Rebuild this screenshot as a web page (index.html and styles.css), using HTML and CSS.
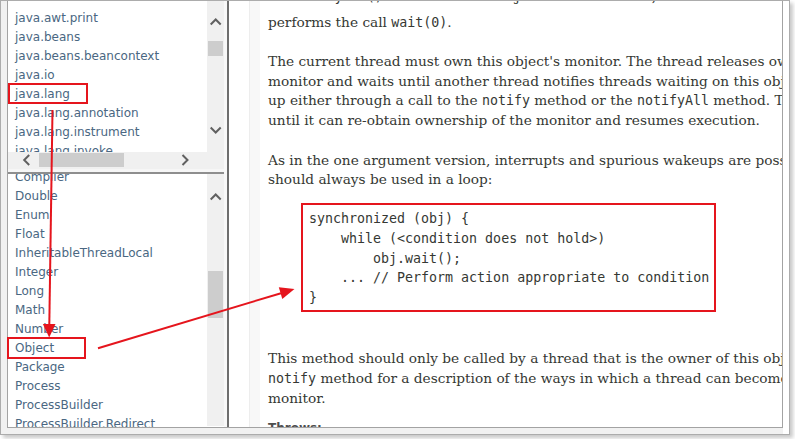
FILE: index.html
```html
<!DOCTYPE html>
<html>
<head>
<meta charset="utf-8">
<title>Object.wait</title>
<link rel="stylesheet" href="styles.css">
</head>
<body>
<div class="shot">
  <div class="app">
    <div class="left">
      <div class="pane pane-top">
        <div class="list-wrap">
          <ul class="list list-top">
            <li>java.awt.print</li>
            <li>java.beans</li>
            <li>java.beans.beancontext</li>
            <li>java.io</li>
            <li>java.lang</li>
            <li>java.lang.annotation</li>
            <li>java.lang.instrument</li>
            <li>java.lang.invoke</li>
            <li>java.lang.management</li>
          </ul>
        </div>
        <svg class="sb" width="17" height="151" viewBox="0 0 17 151">
          <polyline class="chev" points="3.7,23.5 8.7,18.5 13.7,23.5"/>
          <rect class="thumb" x="1" y="40" width="15" height="15"/>
          <polyline class="chev" points="3.7,126.5 8.7,131.5 13.7,126.5"/>
        </svg>
        <svg class="sb" width="199" height="17" viewBox="0 0 199 17">
          <polyline class="chev" points="21.2,3 16.2,8 21.2,13"/>
          <rect class="thumb" x="31" y="1" width="85" height="14"/>
          <polyline class="chev" points="174.5,3 179.5,8 174.5,13"/>
        </svg>
        <div class="sb corner"></div>
      </div>
      <div class="hsplit"></div>
      <div class="pane pane-bottom">
        <div class="list-wrap">
          <ul class="list list-bottom">
            <li>Compiler</li>
            <li>Double</li>
            <li>Enum</li>
            <li>Float</li>
            <li>InheritableThreadLocal</li>
            <li>Integer</li>
            <li>Long</li>
            <li>Math</li>
            <li>Number</li>
            <li>Object</li>
            <li>Package</li>
            <li>Process</li>
            <li>ProcessBuilder</li>
            <li>ProcessBuilder.Redirect</li>
            <li>Runtime</li>
          </ul>
        </div>
        <svg class="sb" width="17" height="252" viewBox="0 0 17 252">
          <polyline class="chev" points="3.7,25.5 8.7,20.5 13.7,25.5"/>
          <rect class="thumb" x="1" y="97" width="15" height="47"/>
        </svg>
      </div>
    </div>
    <div class="vsplit"></div>
    <div class="doc">
      <div class="method">
        <div class="detail">
          <div class="block">
            <p>
              <span class="ln cut">the <code>notifyAll()</code> method for this object. In other words, this method behaves exactly as if it simply</span>
              <span class="ln">performs the call <code>wait(0)</code>.</span>
            </p>
            <p class="gap">
              <span class="ln">The current thread must own this object's monitor. The thread releases ownership of this</span>
              <span class="ln">monitor and waits until another thread notifies threads waiting on this object's monitor to wake</span>
              <span class="ln">up either through a call to the <code>notify</code> method or the <code>notifyAll</code> method. The thread then waits</span>
              <span class="ln">until it can re-obtain ownership of the monitor and resumes execution.</span>
            </p>
            <p class="gap">
              <span class="ln">As in the one argument version, interrupts and spurious wakeups are possible, and this method</span>
              <span class="ln">should always be used in a loop:</span>
            </p>
<pre class="code">synchronized (obj) {
    while (&lt;condition does not hold&gt;)
        obj.wait();
    ... // Perform action appropriate to condition
}</pre>
            <p class="after-code">
              <span class="ln">This method should only be called by a thread that is the owner of this object's monitor. See the</span>
              <span class="ln"><code>notify</code> method for a description of the ways in which a thread can become the owner of a</span>
              <span class="ln">monitor.</span>
            </p>
            <div class="throws">Throws:</div>
          </div>
        </div>
      </div>
    </div>
  </div>
</div>
<svg class="marks" width="795" height="439" viewBox="0 0 795 439">
  <rect x="9" y="84" width="78" height="19"/>
  <rect x="8" y="338" width="77" height="20"/>
  <line x1="52.5" y1="110" x2="49.3" y2="325"/>
  <polygon points="55.5,324 42.9,324 49.2,337.5"/>
  <line x1="98" y1="348.3" x2="281" y2="293.2"/>
  <polygon points="294.5,289 282.3,298.9 278.8,287.3"/>
</svg>
</body>
</html>
```

FILE: styles.css
```css
html, body {
  margin: 0;
  padding: 0;
  background: #ffffff;
}

body {
  position: relative;
  width: 795px;
  height: 439px;
  overflow: hidden;
}

.shot {
  width: 790px;
  height: 435px;
  box-sizing: border-box;
  border: 1px solid #acacac;
  padding: 0 6px 6px 6px;
  background: linear-gradient(to right, #f1f1f1 782px, #ffffff 782px);
  box-shadow: 3px 3px 4px rgba(0, 0, 0, 0.22);
}

.app {
  height: 427px;
  box-sizing: border-box;
  border: 1px solid #a3a3a3;
  border-top: none;
  display: flex;
  background: #ffffff;
}

.left {
  width: 216px;
  flex: none;
  display: flex;
  flex-direction: column;
}

.pane {
  display: grid;
  grid-template-columns: 199px 17px;
}

.pane-top {
  grid-template-rows: 151px 17px;
}

.pane-bottom {
  flex: 1;
  min-height: 0;
}

.list-wrap {
  overflow: hidden;
  background: #ffffff;
}

.list {
  margin: 0;
  padding: 0 0 0 7px;
  list-style: none;
  font-family: "DejaVu Sans", "Liberation Sans", sans-serif;
  font-size: 12px;
  line-height: 19px;
  color: #4a6782;
  white-space: nowrap;
}

.list-top {
  padding-top: 8px;
}

.list-bottom {
  margin-top: -6px;
}

.sb {
  display: block;
  background: #f0f0f0;
}

.chev {
  fill: none;
  stroke: #606060;
  stroke-width: 2;
}

.thumb {
  fill: #cdcdcd;
}

.hsplit {
  height: 5px;
  box-sizing: border-box;
  background: #f6f6f6;
  border-bottom: 2px solid #8e8e8e;
}

.vsplit {
  width: 5px;
  flex: none;
  box-sizing: border-box;
  background: #f8f8f8;
  border-right: 2px solid #6e6e6e;
}

.doc {
  flex: 1;
  min-width: 0;
  overflow: hidden;
  background: #ffffff;
  padding-left: 20px;
}

.method {
  width: 720px;
  height: 100%;
  box-sizing: border-box;
  border-left: 1px solid #ededed;
  padding-left: 10px;
  background: #f8f8f8;
}

.detail {
  height: 100%;
  background: #ffffff;
  padding-left: 8px;
  display: flow-root;
}

.block {
  display: flow-root;
  margin-top: -8px;
  font-family: "DejaVu Serif", "Liberation Serif", serif;
  font-size: 13.7px;
  line-height: 19.7px;
  color: #353833;
}

.block p {
  margin: 0;
}

.block .gap {
  margin-top: 19.7px;
}

.ln {
  display: block;
  height: 19.7px;
  white-space: nowrap;
}

.ln.cut {
  margin-top: -6.5px;
  height: 26.2px;
}

.block code {
  font-family: "DejaVu Sans Mono", "Liberation Mono", monospace;
  font-size: 13.3px;
  line-height: 1;
}

.code {
  margin: 13px 0 0 33px;
  width: 415px;
  box-sizing: border-box;
  border: 2px solid #e5151d;
  padding: 4.5px 6px 2.5px;
  font-family: "DejaVu Sans Mono", "Liberation Mono", monospace;
  font-size: 13.3px;
  line-height: 19.6px;
  color: #353833;
}

.block .after-code {
  margin-top: 37.3px;
}

.throws {
  margin-top: 12.9px;
  font-family: "DejaVu Sans", "Liberation Sans", sans-serif;
  font-size: 12px;
  font-weight: bold;
  line-height: 14px;
  color: #4e4e4e;
}

.marks {
  position: absolute;
  left: 0;
  top: 0;
  pointer-events: none;
}

.marks rect,
.marks line {
  fill: none;
  stroke: #e5151d;
  stroke-width: 2;
}

.marks polygon {
  fill: #e5151d;
}
```
